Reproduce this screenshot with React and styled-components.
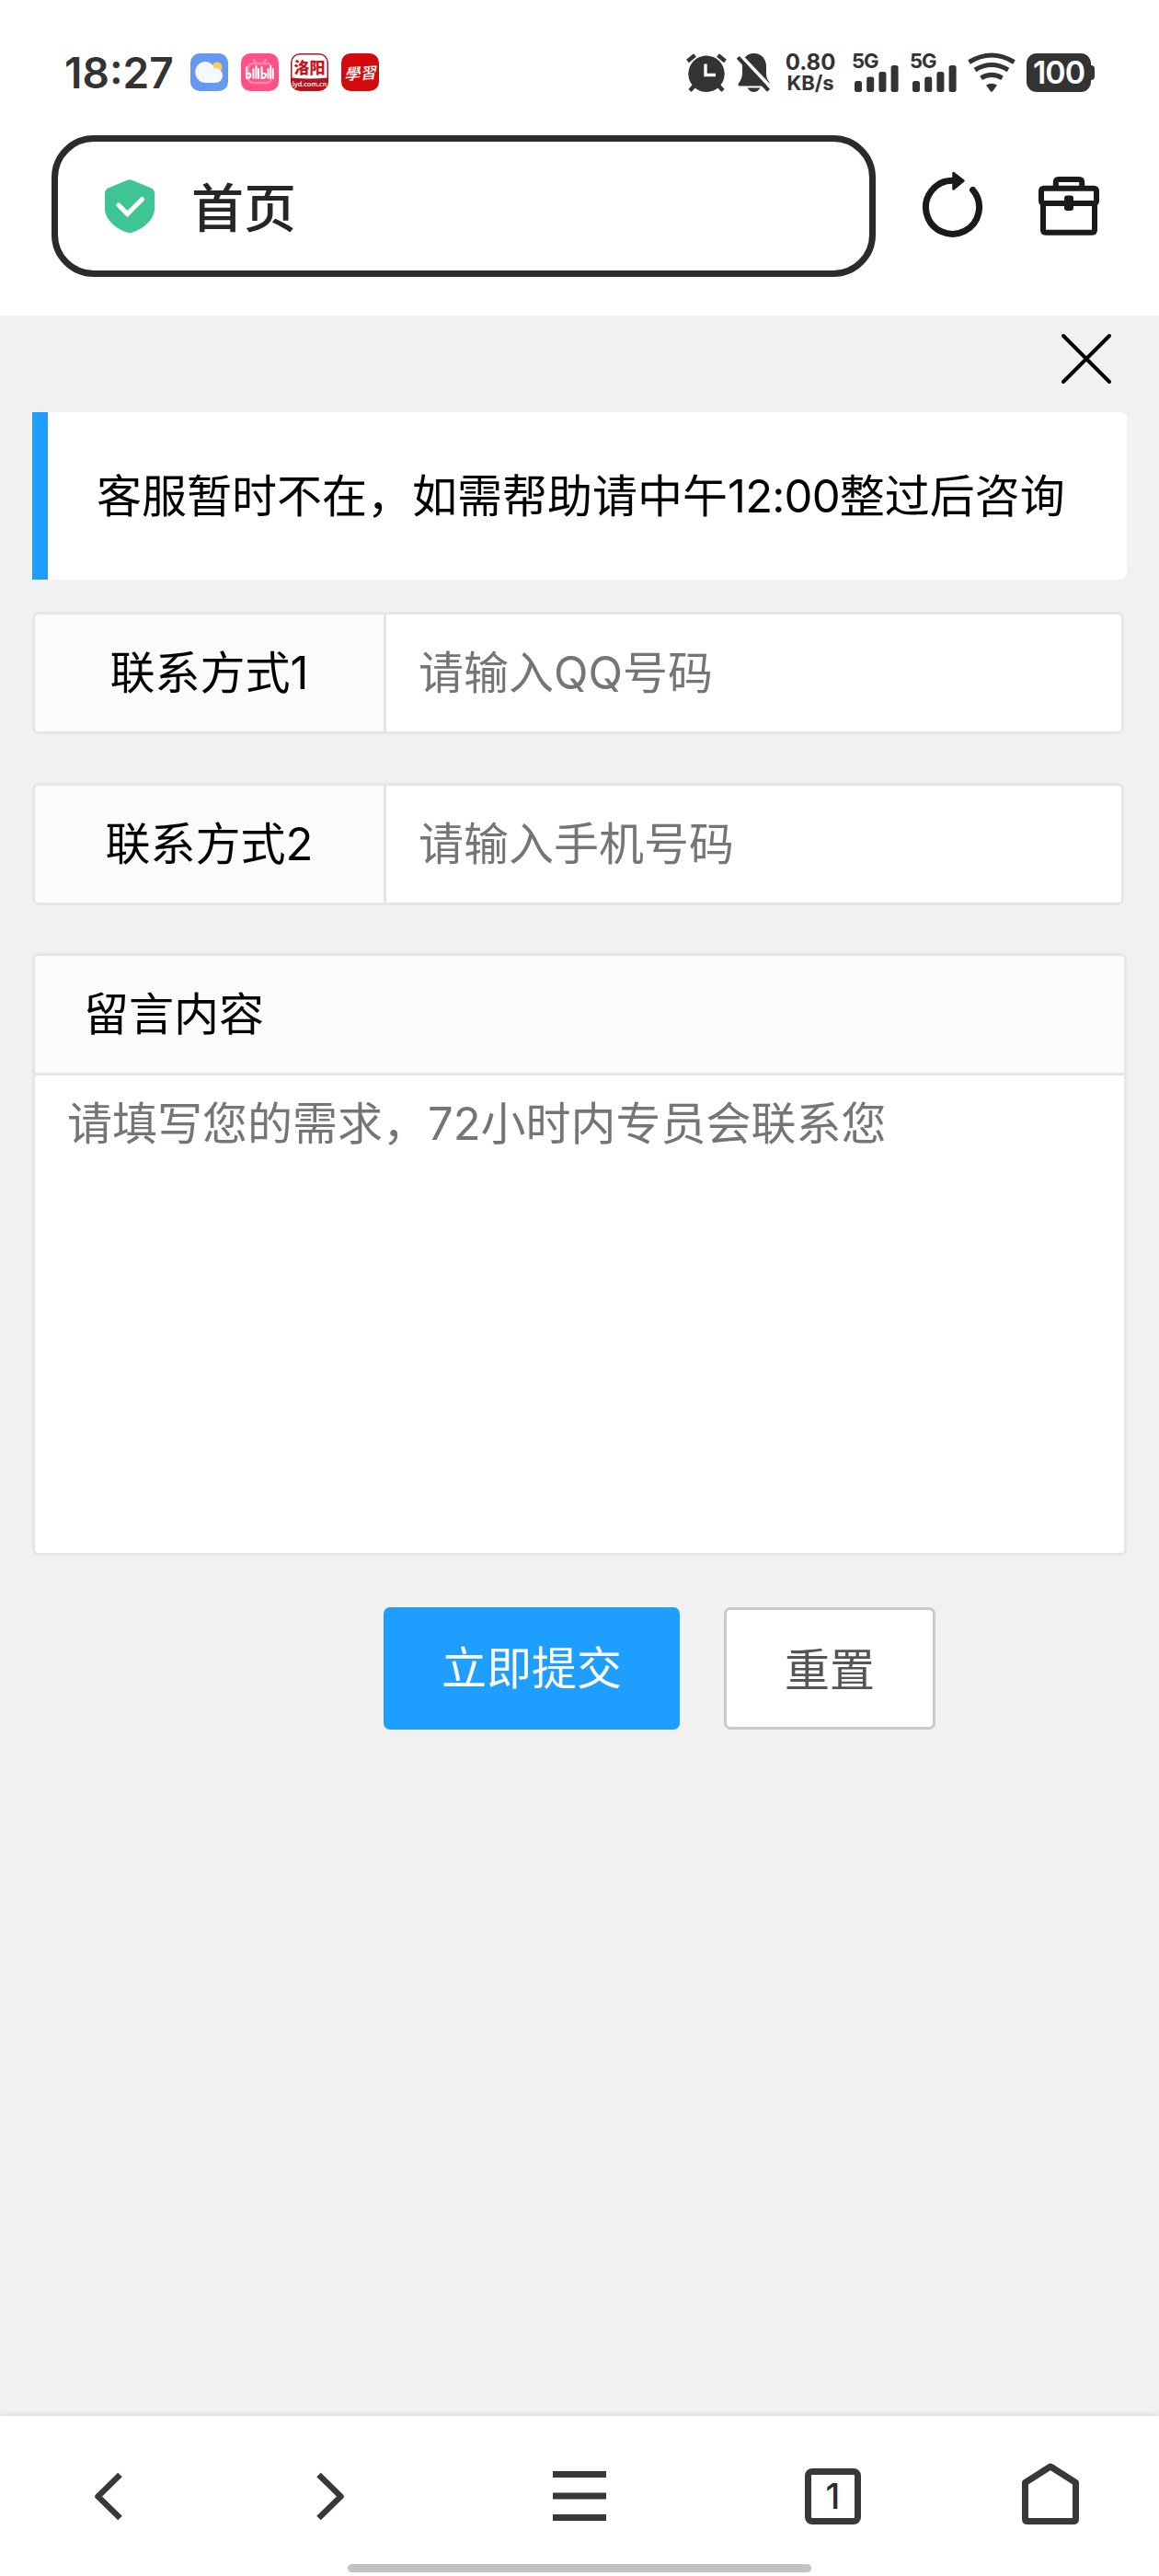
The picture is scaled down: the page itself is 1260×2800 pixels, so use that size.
import styled, { createGlobalStyle } from 'styled-components';

const colors = {
    ink: '#333333',
    outline: '#2b2b2b',
    page: '#f1f1f1',
    blue: '#1e9fff',
    border: '#e6e6e6',
    label: '#fbfbfb',
    placeholder: '#757575',
    nav: '#383838',
};

const networks = ['sim1', 'sim2'];

const contacts = [
    { id: 'qq', label: '联系方式', index: 1, placeholder: '请输入QQ号码', gap: 53 },
    { id: 'phone', label: '联系方式', index: 2, placeholder: '请输入手机号码', gap: 52 },
];

function WeatherIcon() {
    return (
        <svg width="41" height="41" viewBox="0 0 41 41">
            <rect width="41" height="41" rx="10" fill="#6499ef" />
            <circle cx="29" cy="15" r="5.5" fill="#f8cf5c" />
            <path
                d="M16 9a10 10 0 0 1 9.5 7.2A8 8 0 0 1 35 24.500a7.500 7.500 0 0 1-7.500 7.500H16.500A11 11.500 0 0 1 16 9z"
                fill="#f4f9ff"
            />
        </svg>
    );
}

function BiliIcon() {
    return (
        <svg width="41" height="41" viewBox="0 0 41 41">
            <rect width="41" height="41" rx="10" fill="#ff5088" />
            <g stroke="#ff86ae" strokeWidth="2.4" fill="none" strokeLinecap="round">
                <path d="M14 7l3 4M27 7l-3 4" />
                <rect x="8" y="11" width="25" height="21" rx="5" />
            </g>
            <g stroke="#fff" strokeWidth="2" fill="none" strokeLinecap="round">
                <path d="M6 15v12M13.500 17v10M16.500 14v13M19 17v10M22.500 15v12M29.500 17v10M32 14v13M34.800 17v10" />
                <path d="M6 22q5-1 4.500 2t-4.500 3M22.500 22q5-1 4.500 2t-4.500 3" />
            </g>
        </svg>
    );
}

function LuoyangIcon() {
    return (
        <svg width="41" height="41" viewBox="0 0 41 41">
            <defs>
                <clipPath id="luoyang">
                    <rect width="41" height="41" rx="10" />
                </clipPath>
            </defs>
            <g clipPath="url(#luoyang)">
                <rect width="41" height="41" fill="#b5121b" />
                <path d="M1.500 10a8.500 8.500 0 0 1 8.500-8.500h21a8.500 8.500 0 0 1 8.500 8.500v16.500q-19 2-38 0z" fill="#fff" />
            </g>
            <AppText x="20.500" y="21.500" fontSize="17" fontWeight="900" fill="#c8141d" textAnchor="middle">
                洛阳
            </AppText>
            <AppText x="20.500" y="36" fontSize="7.200" fontWeight="500" fill="#fff" textAnchor="middle">
                lyd.com.cn
            </AppText>
        </svg>
    );
}

function StudyIcon() {
    return (
        <svg width="41" height="41" viewBox="0 0 41 41">
            <rect width="41" height="41" rx="10" fill="#d20a0c" />
            <AppText
                x="21"
                y="27"
                fontSize="17"
                fontWeight="500"
                fill="#fff"
                textAnchor="middle"
                transform="translate(6 1) skewX(-14) rotate(-4 20 20)"
            >
                學習
            </AppText>
        </svg>
    );
}

function AlarmIcon() {
    return (
        <svg width="44" height="42" viewBox="0 0 44 42">
            <g stroke={colors.ink} strokeWidth="4.500" strokeLinecap="butt">
                <path d="M1.500 8.500L9.500 2M34.500 2l8 6.500M9 35l-5 5.500M35 35l5 5.500" />
            </g>
            <circle cx="22" cy="22.300" r="19.700" fill={colors.ink} />
            <path d="M21 11.500v12h11" stroke="#fff" strokeWidth="3.400" fill="none" />
        </svg>
    );
}

function MutedBellIcon() {
    return (
        <svg width="37" height="42" viewBox="0 0 37 42">
            <path
                d="M18.500 0C26.500 0 32 6 32 14v8.500q0 5 3.500 9V35.500H3q-2.500-.5-1-3 4-5 4-11V14C6 6 10.500 0 18.500 0z"
                fill={colors.ink}
            />
            <path d="M11.500 37.500h14q-3 4.500-7 4.500t-7-4.500z" fill={colors.ink} />
            <path d="M3.500 1.500L38 38" stroke="#fff" strokeWidth="4" />
            <path d="M1.300 4.300L34.500 40.300" stroke={colors.ink} strokeWidth="4.200" />
        </svg>
    );
}

function SignalIcon() {
    return (
        <svg width="48" height="30" viewBox="0 0 48 30">
            <g fill={colors.ink}>
                <rect x="0" y="18" width="8" height="12" rx="2.500" />
                <rect x="13.200" y="13.500" width="8" height="16.500" rx="2.500" />
                <rect x="26.400" y="8" width="8" height="22" rx="2.500" />
                <rect x="39.600" y="1" width="8" height="29" rx="2.500" />
            </g>
        </svg>
    );
}

function WifiIcon() {
    return (
        <svg width="52" height="42" viewBox="0 0 52 42">
            <g stroke={colors.ink} strokeWidth="5" fill="none">
                <path d="M1.500 9.500Q26-5.500 50.500 9.500" />
                <path d="M8 18Q26 7 44 18" />
                <path d="M14.500 26.800Q26 20 37.500 26.800" />
            </g>
            <path d="M20 34.500Q26 31 32 34.500L27.200 41.200q-1.200 1.300-2.400 0z" fill={colors.ink} />
        </svg>
    );
}

function ShieldIcon() {
    return (
        <svg width="54" height="58" viewBox="0 0 54 58">
            <path
                d="M24 1q3-1.400 6 0l20 8.200q4 1.800 4 6V32c0 11-12 22-24 25.500q-3 1-6 0C12 54 0 43 0 32V15.200q0-4.200 4-6z"
                fill="#3ec594"
            />
            <path d="M15 28l9.500 9.500L40.500 21.500" stroke="#fff" strokeWidth="5.200" fill="none" strokeLinecap="round" />
        </svg>
    );
}

function RefreshIcon() {
    return (
        <svg width="66" height="72" viewBox="0 0 66 72">
            <path
                d="M32.500 10.300A29 29 0 1 0 54.600 20.500"
                stroke="#1a1a1a"
                strokeWidth="7"
                strokeLinecap="round"
                fill="none"
            />
            <path d="M33.500 2L44.500 10.500 33.500 19.500z" fill="#1a1a1a" stroke="#1a1a1a" strokeWidth="2.500" strokeLinejoin="round" />
        </svg>
    );
}

function ToolboxIcon() {
    return (
        <svg width="66" height="64" viewBox="0 0 66 64">
            <g stroke="#1a1a1a" strokeWidth="6" strokeLinejoin="round" fill="none">
                <path d="M18.800 12V6q0-3 3-3h22.400q3 0 3 3v6" />
                <rect x="3" y="12.700" width="60" height="16.300" rx="2.500" />
                <path d="M5 29v29q0 2.700 2.700 2.700h50.600q2.700 0 2.700-2.700V29" />
            </g>
            <rect x="28" y="20.500" width="10" height="16.500" rx="3" fill="#1a1a1a" />
        </svg>
    );
}

function CloseIcon() {
    return (
        <svg width="54" height="54" viewBox="0 0 54 54">
            <path d="M2 2l50 50M52 2L2 52" stroke="#000" strokeWidth="4" strokeLinecap="round" />
        </svg>
    );
}

function BackIcon() {
    return (
        <svg width="32" height="53" viewBox="0 0 32 53">
            <path d="M28.500 3L4.500 26.500l24 23.500" stroke={colors.nav} strokeWidth="6.500" strokeLinejoin="round" fill="none" />
        </svg>
    );
}

function ForwardIcon() {
    return (
        <svg width="32" height="53" viewBox="0 0 32 53">
            <path d="M3.500 3l24 23.500-24 23.500" stroke={colors.nav} strokeWidth="6.500" strokeLinejoin="round" fill="none" />
        </svg>
    );
}

function MenuIcon() {
    return (
        <svg width="58" height="54" viewBox="0 0 58 54">
            <path d="M0 3.500h58M0 27h58M0 50.500h58" stroke={colors.nav} strokeWidth="7" />
        </svg>
    );
}

function HomeIcon() {
    return (
        <svg width="62" height="67" viewBox="0 0 62 67">
            <path
                d="M3.500 21.500L31 4l27.500 17.500v39.500q0 2.500-2.500 2.500H6q-2.500 0-2.500-2.500z"
                stroke={colors.nav}
                strokeWidth="7"
                strokeLinejoin="round"
                fill="none"
            />
        </svg>
    );
}

function StatusBar() {
    return (
        <Status>
            <Clock>18:27</Clock>
            <Apps>
                <WeatherIcon />
                <BiliIcon />
                <LuoyangIcon />
                <StudyIcon />
            </Apps>
            <Indicators>
                <Alerts>
                    <AlarmIcon />
                    <MutedBellIcon />
                </Alerts>
                <Speed>
                    <SpeedValue>0.80</SpeedValue>
                    <SpeedUnit>KB/s</SpeedUnit>
                </Speed>
                {networks.map((name) => (
                    <Network key={name}>
                        <NetworkType>5G</NetworkType>
                        <SignalIcon />
                    </Network>
                ))}
                <WifiIcon />
                <Battery>100</Battery>
            </Indicators>
        </Status>
    );
}

function App() {
    return (
        <Screen>
            <GlobalStyle />
            <StatusBar />
            <Toolbar>
                <AddressBar>
                    <ShieldIcon />
                    <PageTitle>首页</PageTitle>
                </AddressBar>
                <ToolButton $gap={51} $lift={4}>
                    <RefreshIcon />
                </ToolButton>
                <ToolButton $gap={60} $lift={1}>
                    <ToolboxIcon />
                </ToolButton>
            </Toolbar>

            <Content>
                <CloseRow>
                    <PlainButton>
                        <CloseIcon />
                    </PlainButton>
                </CloseRow>
                <Notice>
                    <span>
                        客服暂时不在，如需帮助请中午<Time>12:00</Time>整过后咨询
                    </span>
                </Notice>
                {contacts.map((item) => (
                    <Field key={item.id} $gap={item.gap}>
                        <FieldLabel>
                            {item.label}
                            {item.index}
                        </FieldLabel>
                        <FieldInput placeholder={item.placeholder} />
                    </Field>
                ))}
                <MessageBox>
                    <MessageTitle>留言内容</MessageTitle>
                    <MessageArea placeholder="请填写您的需求，72小时内专员会联系您" />
                </MessageBox>
                <Actions>
                    <SubmitButton>立即提交</SubmitButton>
                    <ResetButton>重置</ResetButton>
                </Actions>
            </Content>

            <BottomBar>
                <NavItems>
                    <NavButton $gap={102}>
                        <BackIcon />
                    </NavButton>
                    <NavButton $gap={209}>
                        <ForwardIcon />
                    </NavButton>
                    <NavButton $gap={226}>
                        <MenuIcon />
                    </NavButton>
                    <NavButton $gap={216}>
                        <TabCount>1</TabCount>
                    </NavButton>
                    <NavButton $gap={175} $lift={5}>
                        <HomeIcon />
                    </NavButton>
                </NavItems>
                <HomeIndicator />
            </BottomBar>
        </Screen>
    );
}

export default App;

const GlobalStyle = createGlobalStyle`
    * {
        box-sizing: border-box;
    }

    body {
        margin: 0;
        background: #ffffff;
        font-family: Inter, "Noto Sans CJK SC", sans-serif;
    }

    svg {
        display: block;
        flex-shrink: 0;
        overflow: visible;
    }

    input,
    textarea,
    button {
        font-family: inherit;
        font-size: inherit;
        margin: 0;
    }
`;

const Screen = styled.div`
    display: flex;
    flex-direction: column;
    width: 1260px;
    height: 2800px;
    overflow: hidden;
    font-size: 49px;
    color: #000000;
`;

const AppText = styled.text`
    font-family: "Noto Sans CJK SC", sans-serif;
`;

const Status = styled.header`
    display: flex;
    align-items: center;
    height: 147px;
    padding: 10px 70px 0 70px;
    color: ${colors.ink};
`;

const Clock = styled.div`
    width: 137px;
    font-size: 46px;
    font-weight: 600;
    line-height: 50px;
`;

const Apps = styled.div`
    display: flex;
    gap: 13.7px;
`;

const Indicators = styled.div`
    display: flex;
    align-items: center;
    margin-left: auto;
    height: 42px;
`;

const Alerts = styled.div`
    display: flex;
    gap: 11px;
`;

const Speed = styled.div`
    display: flex;
    flex-direction: column;
    align-items: center;
    width: 54px;
    margin: 0 18px 0 16px;
    font-weight: 700;
    white-space: nowrap;
`;

const SpeedValue = styled.span`
    font-size: 24px;
    line-height: 22px;
`;

const SpeedUnit = styled.span`
    font-size: 22px;
    line-height: 22px;
`;

const Network = styled.div`
    display: flex;
    flex-direction: column;
    width: 63px;
    height: 42px;

    svg {
        margin-left: 3px;
    }
`;

const NetworkType = styled.span`
    height: 12px;
    font-size: 22px;
    font-weight: 700;
    line-height: 17px;
    letter-spacing: -1px;
`;

const Battery = styled.div`
    display: flex;
    align-items: center;
    justify-content: center;
    position: relative;
    width: 70px;
    height: 42px;
    margin: 0 4px 0 12px;
    border-radius: 11px;
    background: ${colors.ink};
    color: #ffffff;
    font-size: 34px;
    font-weight: 600;
    letter-spacing: -1px;

    &::after {
        content: '';
        position: absolute;
        top: 13px;
        right: -4px;
        width: 4px;
        height: 16px;
        border-radius: 0 4px 4px 0;
        background: ${colors.ink};
    }
`;

const Toolbar = styled.div`
    display: flex;
    align-items: flex-start;
    height: 196px;
    padding-left: 56px;
`;

const AddressBar = styled.div`
    display: flex;
    align-items: center;
    gap: 40px;
    width: 896px;
    height: 154px;
    padding-left: 51px;
    border: 7px solid ${colors.outline};
    border-radius: 46px;
`;

const PageTitle = styled.span`
    padding-top: 5px;
    font-size: 57px;
    font-weight: 500;
    line-height: 70px;
    color: #262626;
`;

const PlainButton = styled.button`
    display: flex;
    align-items: center;
    padding: 0;
    border: 0;
    background: none;
`;

const ToolButton = styled(PlainButton)`
    height: 154px;
    margin-left: ${({ $gap }) => $gap}px;
    padding-bottom: ${({ $lift }) => $lift}px;
`;

const Content = styled.main`
    flex: 1;
    padding: 0 35px;
    background: ${colors.page};
`;

const CloseRow = styled.div`
    display: flex;
    align-items: flex-start;
    justify-content: flex-end;
    height: 105px;
    padding: 20px 17px 0 0;
`;

const Notice = styled.div`
    display: flex;
    align-items: center;
    height: 182px;
    margin-bottom: 35px;
    padding: 0 0 7px 53px;
    border-left: 17px solid ${colors.blue};
    border-radius: 0 7px 7px 0;
    background: #ffffff;
    white-space: nowrap;
`;

const Time = styled.span`
    letter-spacing: -0.8px;
`;

const Field = styled.div`
    display: flex;
    width: 1187px;
    height: 133px;
    margin-bottom: ${({ $gap }) => $gap}px;
    border: 3px solid ${colors.border};
    border-radius: 7px;
    background: #ffffff;
`;

const FieldLabel = styled.label`
    display: flex;
    align-items: center;
    justify-content: center;
    width: 382px;
    padding-bottom: 9px;
    border-right: 3px solid ${colors.border};
    border-radius: 4px 0 0 4px;
    background: ${colors.label};
`;

const FieldInput = styled.input`
    flex: 1;
    min-width: 0;
    padding: 0 35px;
    border: 0;
    outline: 0;
    background: transparent;

    &::placeholder {
        color: ${colors.placeholder};
    }
`;

const MessageBox = styled.div`
    display: flex;
    flex-direction: column;
    height: 655px;
    border: 3px solid ${colors.border};
    border-radius: 7px;
    background: #ffffff;
`;

const MessageTitle = styled.div`
    display: flex;
    align-items: center;
    height: 130px;
    padding: 0 0 9px 53px;
    border-bottom: 3px solid ${colors.border};
    border-radius: 4px 4px 0 0;
    background: ${colors.label};
`;

const MessageArea = styled.textarea`
    flex: 1;
    padding: 21px 35px;
    border: 0;
    outline: 0;
    resize: none;
    background: transparent;
    line-height: 64px;

    &::placeholder {
        color: ${colors.placeholder};
    }
`;

const Actions = styled.div`
    display: flex;
    gap: 48px;
    padding: 56px 0 0 382px;
`;

const SubmitButton = styled.button`
    width: 322px;
    height: 133px;
    padding: 0 0 8px;
    border: 0;
    border-radius: 7px;
    background: ${colors.blue};
    color: #ffffff;
`;

const ResetButton = styled(SubmitButton)`
    width: 230px;
    padding-bottom: 4px;
    border: 3px solid #c9c9c9;
    background: #ffffff;
    color: #555555;
`;

const BottomBar = styled.nav`
    display: flex;
    flex-direction: column;
    align-items: center;
    height: 174px;
    background: #ffffff;
    box-shadow: 0 -1px 7px rgba(0, 0, 0, 0.1);
`;

const NavItems = styled.div`
    display: flex;
    align-items: center;
    width: 100%;
    height: 161px;
    padding-top: 13px;
`;

const NavButton = styled(PlainButton)`
    margin-left: ${({ $gap }) => $gap}px;
    padding-bottom: ${({ $lift }) => $lift || 0}px;
`;

const TabCount = styled.div`
    display: flex;
    align-items: center;
    justify-content: center;
    width: 61px;
    height: 61px;
    border: 7px solid ${colors.nav};
    border-radius: 8px;
    color: #2b2b2b;
    font-size: 38px;
    font-weight: 500;
`;

const HomeIndicator = styled.div`
    width: 504px;
    height: 9px;
    border-radius: 5px;
    background: #c2c2c2;
`;
